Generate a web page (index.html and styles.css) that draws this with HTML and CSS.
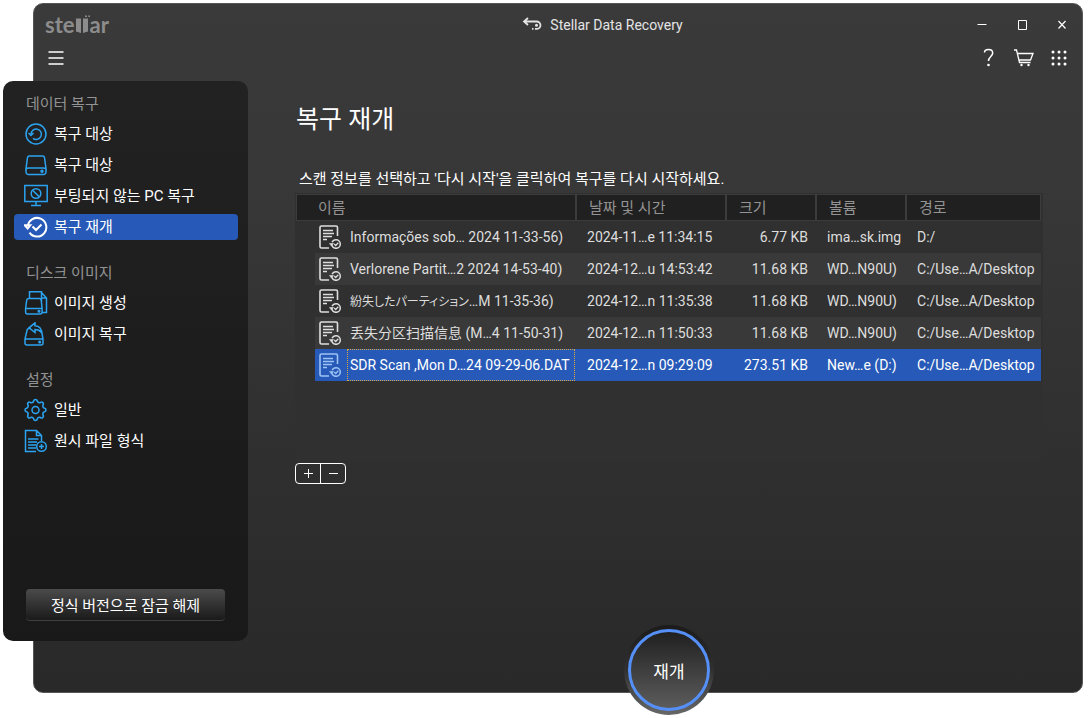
FILE: index.html
```html
<!DOCTYPE html>
<html lang="ko">
<head>
<meta charset="utf-8">
<title>Stellar Data Recovery</title>
<link rel="stylesheet" href="styles.css">
</head>
<body>
<svg class="defs" aria-hidden="true">
  <symbol id="scan-file" viewBox="0 0 24 24">
    <path d="M11 23H3.500a1.500 1.500 0 0 1-1.500-1.500V2.500a1.500 1.500 0 0 1 1.500-1.500h14.500a1.500 1.500 0 0 1 1.500 1.500V11" stroke-width="1.600"/>
    <path d="M5 5.500h10M5 8.500h11M5 11.500h9M5 14.500h4" stroke-width="1.500"/>
    <circle cx="18" cy="19" r="4.300" stroke-width="1.500" stroke-dasharray="24 3" stroke-dashoffset="12"/>
    <path d="M16.200 19l1.500 1.500 2.600-2.800" stroke-width="1.300"/>
    <path d="M11.500 18.500h4l-2 2.600z" stroke-width=".6" fill="currentColor"/>
  </symbol>
</svg>
<div class="window">
  <header class="titlebar">
    <div class="logo" role="img" aria-label="stellar">
      <span>ste</span><svg width="15" height="19" viewBox="0 0 15 19"><path d="M1 3.500h5V18l-5-1.500zM8 3.500h5V16.500l-5 1.500zM10 .5h2v1.500h-2zM13.300 .5h1.700v1.500h-1.700z" fill="currentColor" stroke="none"/></svg><span>ar</span>
    </div>
    <div class="apptitle">
      <svg width="20" height="16" viewBox="0 0 20 16"><path d="M6 1L2 4.500l4 3.500M2 4.500h12.500a3.700 3.700 0 0 1 .5 7.400h-2M11.500 11.900h-1.500" stroke-width="1.800"/><circle cx="14.500" cy="8.200" r="1.500" fill="currentColor" stroke="none"/></svg>
      <span>Stellar Data Recovery</span>
    </div>
    <div class="controls">
      <button aria-label="최소화"><svg width="12" height="12" viewBox="0 0 12 12"><path d="M1.500 5.500h9"/></svg></button>
      <button aria-label="최대화"><svg width="12" height="12" viewBox="0 0 12 12"><path d="M2.500 1.500h8v9h-8z"/></svg></button>
      <button aria-label="닫기"><svg width="12" height="12" viewBox="0 0 12 12"><path d="M2.500 2l7 7.500M9.500 2l-7 7.500" stroke-width="1.200"/></svg></button>
    </div>
  </header>
  <div class="toolbar">
    <button class="menu" aria-label="메뉴"><svg width="16" height="14" viewBox="0 0 16 14"><path d="M.5 1h15M.5 7h15M.5 13h15" stroke-width="1.300"/></svg></button>
    <button aria-label="도움말"><svg width="12" height="20" viewBox="0 0 12 20"><path d="M1.500 4.500C1.500 2.500 3.300 1.500 5.500 1.500s4.200 1.200 4.200 3.500c0 3.300-4.200 3.800-4.200 8" stroke-width="1.500"/><circle cx="5.500" cy="17" r="1.300" fill="currentColor" stroke="none"/></svg></button>
    <button aria-label="구매"><svg width="22" height="18" viewBox="0 0 22 18"><path d="M1 1h2.500l3 12.500h11M4.300 4.500H20l-2.500 6.500H6" stroke-width="1.300"/><circle cx="8.500" cy="16" r="1.200" fill="currentColor" stroke="none"/><circle cx="15.500" cy="16" r="1.200" fill="currentColor" stroke="none"/></svg></button>
    <button aria-label="앱"><svg width="16" height="16" viewBox="0 0 16 16"><path d="M2 2h.01M8 2h.01M14 2h.01M2 8h.01M8 8h.01M14 8h.01M2 14h.01M8 14h.01M14 14h.01" stroke-width="3" stroke-linecap="round"/></svg></button>
  </div>
  <div class="body">
    <nav class="sidebar">
      <h2>데이터 복구</h2>
      <a href="#"><svg viewBox="0 0 24 24"><circle cx="12" cy="12" r="10"/><path d="M7 12a5.200 5.200 0 1 1 2 4.300M4.500 11l2.500 2.500 2.500-2.500"/></svg>복구 대상</a>
      <a href="#"><svg viewBox="0 0 24 24"><path d="M5.500 3h13a2 2 0 0 1 2 1.700L22 15.500V19a2.500 2.500 0 0 1-2.500 2.500h-15A2.500 2.500 0 0 1 2 19v-3.500L3.500 4.700a2 2 0 0 1 2-1.700zM2.200 16c.5-.8 1.500-1 2.300-1h15c.8 0 1.800.2 2.300 1"/><circle cx="18" cy="18.300" r="1" fill="currentColor"/></svg>복구 대상</a>
      <a href="#"><svg viewBox="0 0 24 24"><path d="M.8 1.500h22.400v16H.8zM12 17.500v3.500M7 21.500h10"/><circle cx="12" cy="9.500" r="4.800"/><path d="M8.600 6.200l6.800 6.700"/></svg>부팅되지 않는 PC 복구</a>
      <a href="#" class="current" aria-current="page"><svg viewBox="0 0 24 24"><path d="M3.800 11a9.300 9.300 0 1 1 1.700 6.700M7 19.500a9.300 9.300 0 0 0 2 1.300M.8 10.300h5.500l-2.600 3.200zM8.500 11.500l3.500 3.500 5.500-5.500" stroke-width="2"/></svg>복구 재개</a>
      <h2 class="next">디스크 이미지</h2>
      <a href="#"><svg viewBox="0 0 24 24"><path d="M5.500 7.500V.8H17.500v10M17.500 1.500l5 5.500v14.500h-4M17.500 1.500V7h5M4.800 7.500h10.500c1 0 1.700.6 1.900 1.600l.9 8.400V21a2 2 0 0 1-2 2H3.600a2 2 0 0 1-2-2v-3.500l1.100-8.400c.2-1 1.100-1.600 2.100-1.600zM1.600 17.500h16.500"/><circle cx="15" cy="20.300" r=".8" fill="currentColor"/></svg>이미지 생성</a>
      <a href="#"><svg viewBox="0 0 24 24"><path d="M7 6.500H5c-1 0-1.700.6-1.900 1.500L1 17v4a2 2 0 0 0 2 2h14a2 2 0 0 0 2-2v-4L17.500 8.500M1 17h18M11 .8L5 5.800l6 4.700V7.500c3 0 5 1 6.500 3 0-4-2.500-6.500-6.500-6.800z"/><circle cx="15.700" cy="20" r=".8" fill="currentColor"/></svg>이미지 복구</a>
      <h2 class="next">설정</h2>
      <a href="#"><svg viewBox="0 0 24 24"><path transform="translate(11.500 12) scale(1.060)" d="M8.430-1.680A1.700 1.700 0 0 1 8.430 1.680A2.200 2.200 0 0 0 7.150 4.780A1.700 1.700 0 0 1 4.780 7.150A2.200 2.200 0 0 0 1.680 8.430A1.700 1.700 0 0 1-1.680 8.430A2.200 2.200 0 0 0-4.780 7.150A1.700 1.700 0 0 1-7.150 4.780A2.200 2.200 0 0 0-8.430 1.680A1.700 1.700 0 0 1-8.430-1.680A2.200 2.200 0 0 0-7.150-4.780A1.700 1.700 0 0 1-4.780-7.150A2.200 2.200 0 0 0-1.680-8.430A1.700 1.700 0 0 1 1.680-8.430A2.200 2.200 0 0 0 4.780-7.150A1.700 1.700 0 0 1 7.150-4.780A2.200 2.200 0 0 0 8.430-1.680z"/><circle cx="11.500" cy="12" r="3.500"/></svg>일반</a>
      <a href="#"><svg viewBox="0 0 24 24"><path d="M12 22.500H1.500V1.500h11l5 5v5.500M12.500 1.500v5h5M4 10h10.500M4 13h9M4 16h8M4 19h8"/><circle cx="17.500" cy="17.500" r="4.800"/><path d="M17.500 15v5M15 17.500h5"/></svg>원시 파일 형식</a>
      <button class="unlock">정식 버전으로 잠금 해제</button>
    </nav>
    <main>
      <h1>복구 재개</h1>
      <p>스캔 정보를 선택하고 '다시 시작'을 클릭하여 복구를 다시 시작하세요.</p>
      <div class="panel">
        <table>
          <colgroup><col class="c-indent"><col class="c-name"><col class="c-date"><col class="c-size"><col class="c-vol"><col></colgroup>
          <thead><tr><th colspan="2" class="first">이름</th><th>날짜 및 시간</th><th>크기</th><th>볼륨</th><th>경로</th></tr></thead>
          <tbody>
            <tr><td></td><td class="name"><div><svg><use href="#scan-file"/></svg><span>Informações sob… 2024 11-33-56)</span></div></td><td>2024-11…e 11:34:15</td><td class="num">6.77 KB</td><td>ima…sk.img</td><td>D:/</td></tr>
            <tr><td></td><td class="name"><div><svg><use href="#scan-file"/></svg><span>Verlorene Partit…2 2024 14-53-40)</span></div></td><td>2024-12…u 14:53:42</td><td class="num">11.68 KB</td><td>WD…N90U)</td><td>C:/Use…A/Desktop</td></tr>
            <tr><td></td><td class="name"><div><svg><use href="#scan-file"/></svg><span><span lang="ja">紛失したパーティション</span>…M 11-35-36)</span></div></td><td>2024-12…n 11:35:38</td><td class="num">11.68 KB</td><td>WD…N90U)</td><td>C:/Use…A/Desktop</td></tr>
            <tr><td></td><td class="name"><div><svg><use href="#scan-file"/></svg><span><span lang="zh-Hans">丢失分区扫描信息</span> (M…4 11-50-31)</span></div></td><td>2024-12…n 11:50:33</td><td class="num">11.68 KB</td><td>WD…N90U)</td><td>C:/Use…A/Desktop</td></tr>
            <tr class="selected"><td></td><td class="name"><div><svg><use href="#scan-file"/></svg><span>SDR Scan ,Mon D…24 09-29-06.DAT</span></div></td><td>2024-12…n 09:29:09</td><td class="num">273.51 KB</td><td>New…e (D:)</td><td>C:/Use…A/Desktop</td></tr>
          </tbody>
        </table>
      </div>
      <div class="edit">
        <button aria-label="추가"><svg width="11" height="11" viewBox="0 0 11 11"><path d="M1 5.500h9M5.500 1v9"/></svg></button>
        <button aria-label="제거"><svg width="11" height="11" viewBox="0 0 11 11"><path d="M1 5.500h9"/></svg></button>
      </div>
      <div class="action"><button class="resume"><span>재개</span></button></div>
    </main>
  </div>
</div>
</body>
</html>
```
FILE: styles.css
```css
* { box-sizing: border-box; }
body {
  margin: 0;
  background: #fff;
  color: #fff;
  font-family: Roboto, "Noto Sans CJK KR", sans-serif;
  font-size: 15px;
}
.defs { display: none; }
svg { fill: none; stroke: currentColor; flex: none; }
button {
  font: inherit;
  color: inherit;
  background: none;
  border: 0;
  padding: 0;
  cursor: pointer;
}
.window {
  display: flex;
  flex-direction: column;
  min-height: calc(100vh - 28px);
  margin: 3px 9px 25px 33px;
  border: 1px solid #565656;
  border-radius: 10px;
  background: linear-gradient(#3a3a3a, #373737 30%, #2f2f2f 68%, #292929);
}
.titlebar {
  display: grid;
  grid-template-columns: 209px 1fr 120px;
  align-items: center;
  height: 42px;
}
.logo {
  display: flex;
  align-items: baseline;
  padding-left: 11px;
  color: #8c8c8c;
  font: 700 22px/28px Lato, sans-serif;
}
.logo svg { align-self: flex-start; margin-top: 4px; }
.apptitle {
  display: flex;
  align-items: center;
  justify-content: center;
  gap: 8px;
  color: #e4e4e4;
  font-size: 14px;
}
.controls { display: flex; }
.controls button { display: grid; place-items: center; width: 40px; height: 40px; }
.toolbar { display: flex; align-items: center; height: 24px; margin-bottom: 11px; padding-right: 6px; }
.toolbar button { display: grid; place-items: center; width: 35px; height: 22px; }
.toolbar .menu { width: 32px; margin: 0 auto 0 6px; }
.body { display: flex; flex: 1; }

.sidebar {
  display: flex;
  flex-direction: column;
  gap: 5px;
  width: 245px;
  flex: none;
  margin: 0 0 51px -31px;
  padding: 9px 10px 20px 11px;
  border-radius: 10px;
  background: linear-gradient(#222, #1c1c1c 60%, #191919);
}
.sidebar h2 {
  height: 26px;
  margin: 0;
  padding-left: 12px;
  color: #939393;
  font-size: 15px;
  font-weight: 400;
  line-height: 28px;
}
.sidebar .next { margin-top: 14px; }
.sidebar a {
  display: flex;
  align-items: center;
  gap: 6px;
  height: 26px;
  padding-left: 10px;
  border-radius: 4px;
  color: #fff;
  line-height: 24px;
  text-decoration: none;
}
.sidebar a svg { width: 24px; height: 24px; color: #2ba3f0; stroke-width: 1.5; }
.sidebar .current { background: #275ab8; }
.sidebar .current svg { color: #fff; }
.unlock {
  height: 32px;
  margin: auto 13px 0 12px;
  border-bottom: 1px solid #404040;
  border-radius: 4px;
  background: linear-gradient(#4b4b4b, #1a1a1a);
}

main { display: flex; flex-direction: column; flex: 1; min-width: 0; padding: 0 39px 0 47px; }
h1 { margin: 20px 0 30px 1px; font-size: 25px; font-weight: 400; line-height: 38px; }
p { margin: 0 0 4px 4px; line-height: 20px; }
.panel { min-height: 268px; padding: 1px 2px 0 1px; background: #303030; }
table { width: 100%; table-layout: fixed; border-collapse: separate; border-spacing: 0; }
.c-indent { width: 19px; }
.c-name { width: 261px; }
.c-date { width: 150px; }
.c-size, .c-vol { width: 90px; }
th {
  height: 27px;
  padding: 0 0 0 12px;
  border: 1px solid #3c3c3c;
  background: #202020;
  color: #939393;
  font-weight: 400;
  line-height: 22px;
  text-align: left;
}
th.first { padding-left: 21px; }
td {
  height: 32px;
  padding: 0 0 0 11px;
  color: #dedede;
  font-size: 14px;
  line-height: 20px;
  white-space: nowrap;
}
td:first-child { padding: 0; }
td.num { padding: 0 8px 0 0; text-align: right; }
td.name { padding: 0 1px 0 3px; }
.name div { display: flex; align-items: center; gap: 5px; }
.name svg { width: 24px; height: 24px; }
.name div > span { flex: 1; padding: 5px 0 5px 2px; border: 1px solid transparent; }
[lang="ja"] { font-family: "Noto Sans CJK JP", sans-serif; font-size: 12px; font-feature-settings: "palt"; line-height: 1; }
[lang="zh-Hans"] { font-family: "Noto Sans CJK SC", sans-serif; line-height: 1; }
tbody tr:nth-child(even) td:not(:first-child) { background: #393939; }
tbody .selected td:not(:first-child) { background: #275ab8; color: #fff; }
.selected svg { color: #9dc3f5; }
.selected .name div > span { border: 1px dotted #dca640; }
.edit { display: flex; align-self: flex-start; margin-top: 2px; border: 1px solid #fff; border-radius: 4px; }
.edit button { display: grid; place-items: center; width: 24px; height: 19px; }
.edit button + button { width: 25px; border-left: 1px solid #fff; }
.action { display: flex; justify-content: center; margin: auto 0 -23px; }
.resume {
  width: 90px;
  height: 90px;
  padding: 4px;
  border-radius: 50%;
  background: linear-gradient(#1b1b1b, #303030 50%, #686868);
  font-size: 17px;
}
.resume span {
  display: grid;
  place-items: center;
  height: 100%;
  border: 3px solid #5590f8;
  border-radius: 50%;
  background: linear-gradient(#202020, #5c5c5c);
}
```
